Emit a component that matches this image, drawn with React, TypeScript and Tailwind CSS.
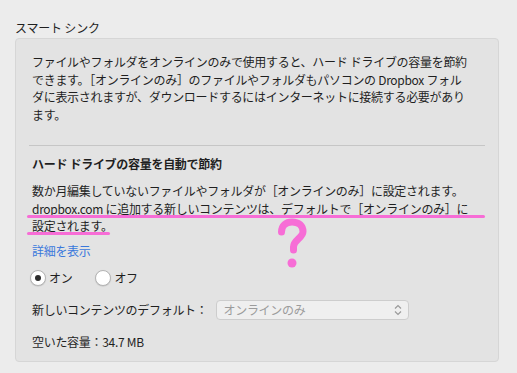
import React from 'react';

const pink = '#f76dd6';

const Radio: React.FC<{ checked?: boolean; label: string }> = ({ checked, label }) => (
  <label className="flex items-center">
    <span className="w-[16px] h-[16px] rounded-full bg-white border border-[#b4b4b4] shadow-[0_0.5px_1px_rgba(0,0,0,0.15)] flex items-center justify-center">
      {checked && <span className="w-[6px] h-[6px] rounded-full bg-[#2d2d2d]" />}
    </span>
    <span className="ml-[3px]">{label}</span>
  </label>
);

const App: React.FC = () => {
  return (
    <div
      className="w-[517px] h-[373px] bg-[#ececec] text-[#1f1f1f] text-[12px] leading-[17.5px] pt-[19px] overflow-hidden"
      style={{ fontFamily: '"Noto Sans CJK JP", "Noto Sans", sans-serif' }}
    >
      <div className="pl-[15px] leading-[18px] tracking-[-0.2px]">スマート シンク</div>

      <div className="ml-[15px] mt-[1px] w-[484px] bg-[#e3e3e3] border border-[#d6d6d6] rounded-[4px] pl-[16px] pt-[14px] pb-[10px] tracking-[-0.3px]">
        <p className="whitespace-nowrap">
          ファイルやフォルダをオンラインのみで使用すると、ハード ドライブの容量を節約
          <br />
          できます。［オンラインのみ］のファイルやフォルダもパソコンの Dropbox フォル
          <br />
          ダに表示されますが、ダウンロードするにはインターネットに接続する必要があり
          <br />
          ます。
        </p>

        <div className="mt-[22px] -ml-[3px] w-[456px] h-px bg-[#c6c6c6]" />

        <h3 className="mt-[9px] font-bold leading-[18px]">ハード ドライブの容量を自動で節約</h3>

        <div className="relative mt-[9px]">
          <p className="whitespace-nowrap">
            数か月編集していないファイルやフォルダが［オンラインのみ］に設定されます。
            <br />
            dropbox.com に追加する新しいコンテンツは、デフォルトで［オンラインのみ］に
            <br />
            設定されます。
          </p>
          <div className="absolute left-[-5px] top-[32.5px] w-[458px] h-[3.5px] rounded-full" style={{ background: pink }} />
          <div className="absolute left-[-5px] top-[49.5px] w-[83px] h-[3.5px] rounded-full" style={{ background: pink }} />
          <svg className="absolute left-[243px] top-[35px]" width="34" height="54" viewBox="0 0 34 54">
            <path
              d="M6.5 15 C6.5 8.5 11 5 17 5 C24 5 28 9 28 14.5 C28 21 18.5 23 18.5 30 L18.5 33"
              fill="none"
              stroke={pink}
              strokeWidth="7"
              strokeLinecap="round"
              strokeLinejoin="round"
            />
            <circle cx="17" cy="46" r="4.5" fill={pink} />
          </svg>
        </div>

        <a className="block mt-[7px] text-[#3a78dc] leading-[18px]">詳細を表示</a>

        <div className="mt-[9px] flex items-center gap-[23px] leading-[18px] -ml-[2px]">
          <Radio checked label="オン" />
          <Radio label="オフ" />
        </div>

        <div className="mt-[13px] flex items-center">
          <span>新しいコンテンツのデフォルト：</span>
          <div className="ml-[8px] w-[193px] h-[20px] bg-[#efefef] border border-[#cdcdcd] rounded-[4px] flex items-center justify-between pl-[7px] pr-[6px]">
            <span className="text-[#9c9c9c]">オンラインのみ</span>
            <svg width="8" height="12" viewBox="0 0 8 12">
              <path d="M1 4.5 L4 1.5 L7 4.5 M1 7.5 L4 10.5 L7 7.5" fill="none" stroke="#9a9a9a" strokeWidth="1.2" />
            </svg>
          </div>
        </div>

        <div className="mt-[13px] leading-[18px]">空いた容量：34.7 MB</div>
      </div>
    </div>
  );
};

export default App;
